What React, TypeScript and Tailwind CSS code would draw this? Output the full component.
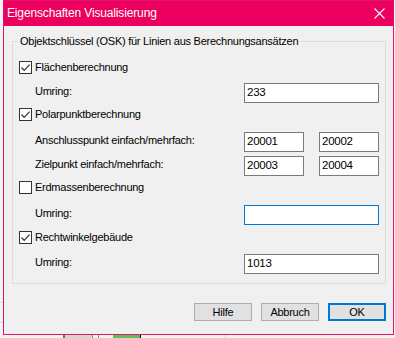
import React from 'react'

function Check({ checked }: { checked: boolean }) {
  return (
    <span className="w-[13px] h-[13px] border border-[#333333] bg-white flex items-center justify-center shrink-0">
      {checked && (
        <svg width="11" height="11" viewBox="0 0 11 11">
          <path d="M1.5 5.5 L4.2 8.3 L9.6 2.6" fill="none" stroke="#333333" strokeWidth="1.2" />
        </svg>
      )}
    </span>
  )
}

function CheckRow({ label, checked, className = '' }: { label: string; checked: boolean; className?: string }) {
  return (
    <div className={`flex items-center h-[14px] pl-[6px] gap-[3px] ${className}`}>
      <Check checked={checked} />
      <span className="leading-[14px]">{label}</span>
    </div>
  )
}

function Field({ value, focused, wide }: { value: string; focused?: boolean; wide?: boolean }) {
  return (
    <div
      className={`h-[20px] bg-white border flex items-center pl-[2px] text-black text-[11.5px] ${wide ? 'w-[135px]' : 'w-[60px]'} ${focused ? 'border-[#0078d7]' : 'border-[#7a7a7a]'}`}
    >
      {value}
    </div>
  )
}

function InputRow({ label, children, className = '' }: { label: string; children: React.ReactNode; className?: string }) {
  return (
    <div className={`flex items-center h-[20px] pl-[22px] ${className}`}>
      <span className="w-[209px] -mt-[3px]">{label}</span>
      <div className="flex gap-[15px]">{children}</div>
    </div>
  )
}

function Btn({ label, primary }: { label: string; primary?: boolean }) {
  return (
    <button
      className={`w-[58px] h-[18px] bg-[#e1e1e1] flex items-center justify-center leading-none ${primary ? 'border-2 border-[#0078d7]' : 'border border-[#adadad]'}`}
    >
      {label}
    </button>
  )
}

export default function App() {
  return (
    <div className="relative w-[395px] h-[338px] bg-[#f3f3f3] overflow-hidden font-['Liberation_Sans',Arial,sans-serif] text-[11px] tracking-[-0.25px] text-black">
      {/* desktop behind */}
      <div className="absolute left-0 top-[302px] w-[3px] h-px bg-[#d9d9d9]" />
      <div className="absolute left-0 top-[322px] w-[3px] h-px bg-[#d9d9d9]" />
      <div className="absolute left-[63px] top-[335px] w-[29px] h-[3px] bg-[#d6d6d6] border-l-2 border-[#707070]" />
      <div className="absolute left-[92px] top-[335px] w-px h-[3px] bg-[#8a8a8a]" />
      <div className="absolute left-[98px] top-[335px] w-px h-[3px] bg-[#8a8a8a]" />
      <div className="absolute left-[113px] top-[335px] w-[27px] h-[3px] bg-[#5cbf5c]" />
      <div className="absolute left-[140px] top-[335px] w-px h-[3px] bg-black" />
      <div className="absolute left-[225px] top-[335px] w-px h-[3px] bg-[#cfcfcf]" />

      {/* dialog window */}
      <div className="absolute left-[3px] top-0 w-[391px] h-[335px] border border-[#e3126b] bg-[#f0f0f0] flex flex-col">
        <div className="h-[25px] bg-[#eb0060] flex items-center justify-between pl-[3px] pr-[8px] text-white text-[12px] tracking-[-0.15px]">
          <span className="-mt-[1px]">Eigenschaften Visualisierung</span>
          <svg width="11" height="11" viewBox="0 0 11 11">
            <path d="M0.5 0.5 L10.5 10.5 M10.5 0.5 L0.5 10.5" stroke="white" strokeWidth="1.1" />
          </svg>
        </div>

        <fieldset className="ml-[8px] mt-[8px] w-[374px] border border-[#dcdcdc] pb-[9px]">
          <legend className="ml-[4px] pl-[3px] pr-[2px] leading-[14px]">
            Objektschlüssel (OSK) für Linien aus Berechnungsansätzen
          </legend>
          <CheckRow label="Flächenberechnung" checked className="mt-[12px]" />
          <InputRow label="Umring:" className="mt-[9px]">
            <Field value="233" wide />
          </InputRow>
          <CheckRow label="Polarpunktberechnung" checked className="mt-[4px]" />
          <InputRow label="Anschlusspunkt einfach/mehrfach:" className="mt-[11px]">
            <Field value="20001" />
            <Field value="20002" />
          </InputRow>
          <InputRow label="Zielpunkt einfach/mehrfach:" className="mt-[4px]">
            <Field value="20003" />
            <Field value="20004" />
          </InputRow>
          <CheckRow label="Erdmassenberechnung" checked={false} className="mt-[4px]" />
          <InputRow label="Umring:" className="mt-[11px]">
            <Field value="" wide focused />
          </InputRow>
          <CheckRow label="Rechtwinkelgebäude" checked className="mt-[5px]" />
          <InputRow label="Umring:" className="mt-[10px]">
            <Field value="1013" wide />
          </InputRow>
        </fieldset>

        <div className="ml-[8px] w-[374px] mt-[19px] flex justify-end gap-[9px]">
          <Btn label="Hilfe" />
          <Btn label="Abbruch" />
          <Btn label="OK" primary />
        </div>
      </div>
    </div>
  )
}
